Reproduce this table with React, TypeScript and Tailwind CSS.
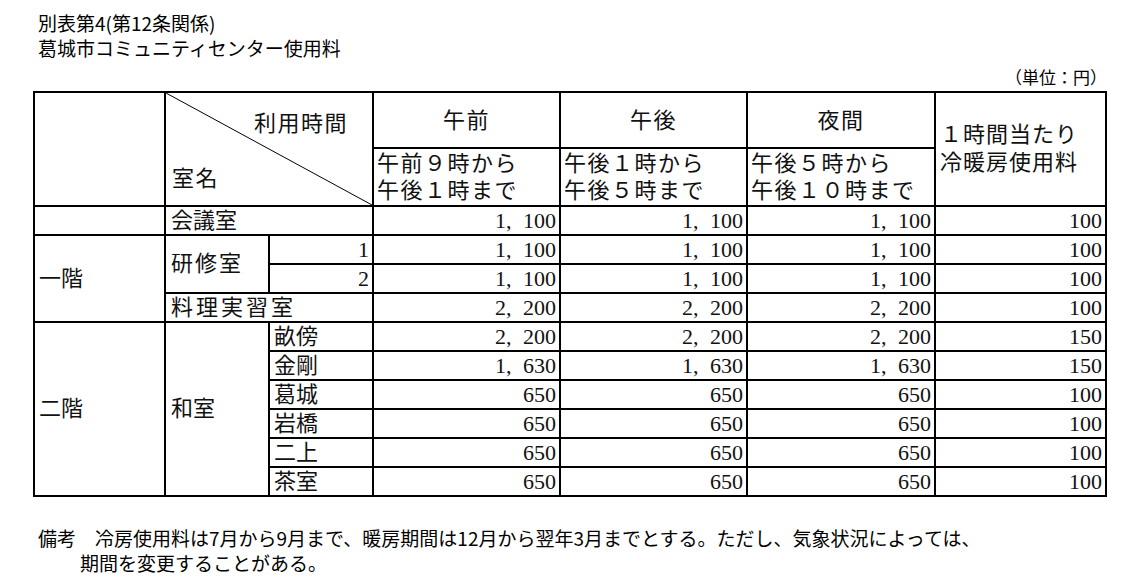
import React from "react";

type Row = { vals: string[]; fee: string };

const Num = ({ v }: { v: string }) => {
  const parts = v.split(",");
  if (parts.length === 1) return <>{v}</>;
  return (
    <>
      {parts[0]}
      <span className="inline-block w-[17px] text-left">,</span>
      {parts[1]}
    </>
  );
};

const NumCells = ({ vals, fee }: Row) => (
  <>
    {vals.map((v, i) => (
      <td
        key={i}
        className="border-2 border-black text-right pr-[3px] pl-0 py-0 align-middle leading-none whitespace-nowrap"
      >
        <Num v={v} />
      </td>
    ))}
    <td className="border-2 border-black text-right pr-[3px] pl-0 py-0 align-middle leading-none">
      {fee}
    </td>
  </>
);

const a1100 = ["1,100", "1,100", "1,100"];
const a2200 = ["2,200", "2,200", "2,200"];
const a1630 = ["1,630", "1,630", "1,630"];
const a650 = ["650", "650", "650"];

const washitsu: { name: string; vals: string[]; fee: string }[] = [
  { name: "畝傍", vals: a2200, fee: "150" },
  { name: "金剛", vals: a1630, fee: "150" },
  { name: "葛城", vals: a650, fee: "100" },
  { name: "岩橋", vals: a650, fee: "100" },
  { name: "二上", vals: a650, fee: "100" },
  { name: "茶室", vals: a650, fee: "100" },
];

export default function App() {
  return (
    <div className="w-[1130px] h-[579px] bg-white text-black font-['Noto_Sans_CJK_JP',sans-serif] overflow-hidden">
      <div className="pl-[38px] pt-[10px] text-[19px] leading-[25px]">
        <p>別表第4(第12条関係)</p>
        <p>葛城市コミュニティセンター使用料</p>
      </div>
      <div className="w-[1107px] mt-[4px] text-right text-[17px] leading-[26px]">
        （単位：円）
      </div>
      <table className="ml-[33px] mt-[1px] border-collapse table-fixed w-[1074px] border-2 border-black font-['Liberation_Serif','Noto_Sans_CJK_JP',serif] text-[22px] text-[#111]">
        <colgroup>
          <col className="w-[131px]" />
          <col className="w-[104px]" />
          <col className="w-[104px]" />
          <col className="w-[187px]" />
          <col className="w-[187px]" />
          <col className="w-[188px]" />
          <col className="w-[171px]" />
        </colgroup>
        <thead>
          <tr className="h-[56px]">
            <td rowSpan={2} className="border-2 border-black p-0" />
            <td
              rowSpan={2}
              colSpan={2}
              className="border-2 border-black p-0 relative align-top"
            >
              <div className="relative h-[112px] flex flex-col justify-between">
                <svg
                  className="absolute inset-0 w-full h-full"
                  viewBox="0 0 100 100"
                  preserveAspectRatio="none"
                >
                  <line
                    x1="0"
                    y1="0"
                    x2="100"
                    y2="100"
                    stroke="black"
                    strokeWidth="1"
                    vectorEffect="non-scaling-stroke"
                  />
                </svg>
                <div className="relative text-right pr-[24px] pt-[19px] leading-[24px] tracking-[1.5px]">
                  利用時間
                </div>
                <div className="relative text-left pl-[6px] pb-[14px] leading-[24px] tracking-[1.5px]">
                  室名
                </div>
              </div>
            </td>
            <td className="border-2 border-black text-center align-middle p-0 tracking-[1.5px]">午前</td>
            <td className="border-2 border-black text-center align-middle p-0 tracking-[1.5px]">午後</td>
            <td className="border-2 border-black text-center align-middle p-0 tracking-[1.5px]">夜間</td>
            <td
              rowSpan={2}
              className="border-2 border-black text-left align-middle pl-[4px] pr-0 py-0 leading-[28px] tracking-[1px] whitespace-nowrap"
            >
              １時間当たり
              <br />
              冷暖房使用料
            </td>
          </tr>
          <tr className="h-[58px]">
            <td className="border-2 border-black text-left align-middle pl-[3px] pr-0 py-0 leading-[27px] tracking-[1.5px] whitespace-nowrap">
              午前９時から
              <br />
              午後１時まで
            </td>
            <td className="border-2 border-black text-left align-middle pl-[3px] pr-0 py-0 leading-[27px] tracking-[1.5px] whitespace-nowrap">
              午後１時から
              <br />
              午後５時まで
            </td>
            <td className="border-2 border-black text-left align-middle pl-[3px] pr-0 py-0 leading-[27px] tracking-[1.5px] whitespace-nowrap">
              午後５時から
              <br />
              午後１０時まで
            </td>
          </tr>
        </thead>
        <tbody>
          <tr className="h-[29px]">
            <td className="border-2 border-black p-0" />
            <td colSpan={2} className="border-2 border-black pl-[5px] py-0 leading-none">
              会議室
            </td>
            <NumCells vals={a1100} fee="100" />
          </tr>
          <tr className="h-[29px]">
            <td rowSpan={3} className="border-2 border-black pl-[4px] py-0 leading-none align-middle">
              一階
            </td>
            <td rowSpan={2} className="border-2 border-black pl-[5px] py-0 leading-none align-middle tracking-[2px]">
              研修室
            </td>
            <td className="border-2 border-black text-right pr-[3px] py-0 leading-none">1</td>
            <NumCells vals={a1100} fee="100" />
          </tr>
          <tr className="h-[29px]">
            <td className="border-2 border-black text-right pr-[3px] py-0 leading-none">2</td>
            <NumCells vals={a1100} fee="100" />
          </tr>
          <tr className="h-[29px]">
            <td colSpan={2} className="border-2 border-black pl-[5px] py-0 leading-none tracking-[3px]">
              料理実習室
            </td>
            <NumCells vals={a2200} fee="100" />
          </tr>
          {washitsu.map((r, i) => (
            <tr key={r.name} className="h-[29px]">
              {i === 0 && (
                <>
                  <td rowSpan={6} className="border-2 border-black pl-[4px] py-0 leading-none align-middle">
                    二階
                  </td>
                  <td rowSpan={6} className="border-2 border-black pl-[5px] py-0 leading-none align-middle">
                    和室
                  </td>
                </>
              )}
              <td className="border-2 border-black pl-[4px] py-0 leading-none">{r.name}</td>
              <NumCells vals={r.vals} fee={r.fee} />
            </tr>
          ))}
        </tbody>
      </table>
      <div className="mt-[28px] text-[19px] leading-[25px]">
        <p className="pl-[38px]">
          備考　冷房使用料は7月から9月まで、暖房期間は12月から翌年3月までとする。ただし、気象状況によっては、
        </p>
        <p className="pl-[80px]">期間を変更することがある。</p>
      </div>
    </div>
  );
}
